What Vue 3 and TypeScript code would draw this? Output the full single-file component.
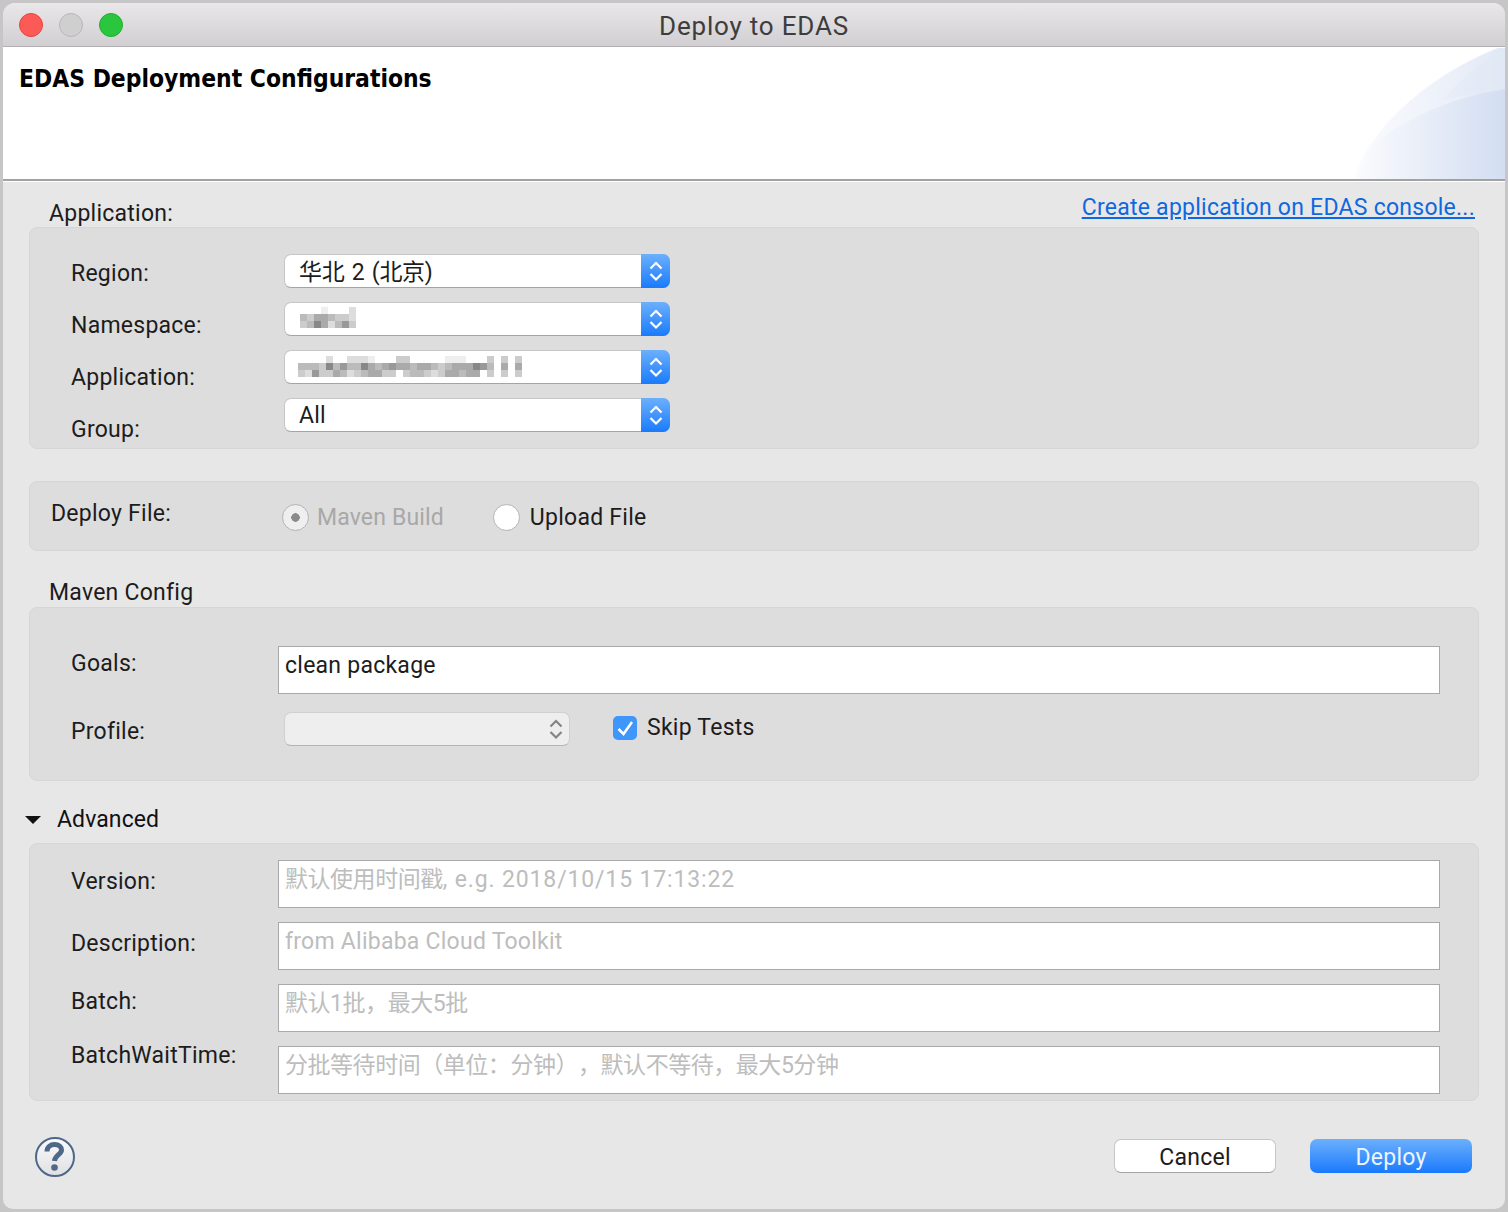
<script setup lang="ts">
const mosaics: Record<string, string[]> = {
  ns: ['fffefffd', 'bcaabccd', 'cb8adb9c'],
  app: [
    'ffffdffdddefffccfffffeeefffcfcfc',
    'bbbc8b9bb8aba9aabaabcbaaa89bfafa',
    'cd9ccabdcbaaccfcbbcdcaabaafcfcfc'
  ]
}
const g = (c: string) => `#${c}${c}${c}`
</script>

<template>
  <div class="window">
    <div class="titlebar">
      <div class="lights">
        <span class="light red"></span>
        <span class="light grey"></span>
        <span class="light green"></span>
      </div>
      <div class="title">Deploy to EDAS</div>
    </div>

    <header class="banner">
      <h1>EDAS Deployment Configurations</h1>
      <svg class="swoosh" width="152" height="132" viewBox="0 0 152 132">
        <defs>
          <linearGradient id="sw1" x1="0" x2="1" y1="0" y2="0">
            <stop offset="0" stop-color="#fbfcfe" />
            <stop offset="1" stop-color="#e2e9f6" />
          </linearGradient>
          <linearGradient id="sw2" x1="0" x2="1" y1="0" y2="0">
            <stop offset="0" stop-color="#fafbfd" />
            <stop offset="1" stop-color="#d3def2" />
          </linearGradient>
        </defs>
        <path d="M2 132C10 90 70 30 145 1H152V132Z" fill="url(#sw1)" />
        <path d="M90 53C105 35 125 18 150 1V43C130 46 110 48 90 53Z" fill="#d8e2f4" opacity="0.15" />
        <path d="M19 98C55 70 100 50 152 42V132H5Z" fill="url(#sw2)" />
      </svg>
    </header>

    <main class="content">
      <div class="section-head">
        <span class="legend">Application:</span>
        <a class="link">Create application on EDAS console...</a>
      </div>
      <section class="group app-group">
        <div class="labels">
          <label>Region:</label>
          <label>Namespace:</label>
          <label>Application:</label>
          <label>Group:</label>
        </div>
        <div class="selects">
          <div class="select"><span class="value tight">华北 2 (北京)</span><span class="stepper"><svg width="14" height="22" viewBox="0 0 14 22"><path d="M1.500 8.500 7 3 12.500 8.500M1.500 14 7 19.500 12.500 14" /></svg></span></div>
          <div class="select">
            <span class="mosaic ns"><i v-for="(row, r) in mosaics.ns" :key="r" class="mrow"><b v-for="(c, k) in row" :key="k" :style="{ background: g(c) }"></b></i></span>
            <span class="stepper"><svg width="14" height="22" viewBox="0 0 14 22"><path d="M1.500 8.500 7 3 12.500 8.500M1.500 14 7 19.500 12.500 14" /></svg></span>
          </div>
          <div class="select">
            <span class="mosaic app"><i v-for="(row, r) in mosaics.app" :key="r" class="mrow"><b v-for="(c, k) in row" :key="k" :style="{ background: g(c) }"></b></i></span>
            <span class="stepper"><svg width="14" height="22" viewBox="0 0 14 22"><path d="M1.500 8.500 7 3 12.500 8.500M1.500 14 7 19.500 12.500 14" /></svg></span>
          </div>
          <div class="select"><span class="value">All</span><span class="stepper"><svg width="14" height="22" viewBox="0 0 14 22"><path d="M1.500 8.500 7 3 12.500 8.500M1.500 14 7 19.500 12.500 14" /></svg></span></div>
        </div>
      </section>

      <section class="group deploy-group">
        <label class="deploy-label">Deploy File:</label>
        <div class="radio-line">
          <span class="radio disabled"></span>
          <span class="radio-text muted">Maven Build</span>
          <span class="radio second"></span>
          <span class="radio-text">Upload File</span>
        </div>
      </section>

      <div class="section-head maven-head">
        <span class="legend">Maven Config</span>
      </div>
      <section class="group maven-group">
        <div class="labels">
          <label>Goals:</label>
          <label>Profile:</label>
        </div>
        <div class="maven-fields">
          <div class="field">clean package</div>
          <div class="profile-line">
            <div class="select dim">
              <svg width="14" height="22" viewBox="0 0 14 22"><path d="M1.500 8.500 7 3 12.500 8.500M1.500 14 7 19.500 12.500 14" /></svg>
            </div>
            <span class="check">
              <svg width="24" height="24" viewBox="0 0 24 24"><path d="M5.500 13 10.500 18 19 6" /></svg>
            </span>
            <span class="check-text">Skip Tests</span>
          </div>
        </div>
      </section>

      <div class="advanced">
        <svg class="caret" width="16" height="8" viewBox="0 0 16 8"><path d="M0 0H16L8 8Z" /></svg>
        <span>Advanced</span>
      </div>
      <section class="group adv-group">
        <div class="labels">
          <label>Version:</label>
          <label>Description:</label>
          <label>Batch:</label>
          <label>BatchWaitTime:</label>
        </div>
        <div class="adv-fields">
          <div class="field ph"><span class="cjk">默认使用时间戳,</span> <span class="num">e.g. 2018/10/15 17:13:22</span></div>
          <div class="field ph">from Alibaba Cloud Toolkit</div>
          <div class="field ph cjk">默认1批，最大5批</div>
          <div class="field ph cjk">分批等待时间（单位：分钟），默认不等待，最大5分钟</div>
        </div>
      </section>

      <footer class="footer">
        <svg class="help" width="42" height="42" viewBox="0 0 42 42">
          <defs>
            <linearGradient id="hg" x1="0" x2="0" y1="0" y2="1">
              <stop offset="0" stop-color="#fbfbfc" />
              <stop offset="1" stop-color="#dfe0e3" />
            </linearGradient>
          </defs>
          <circle cx="21" cy="21" r="19" fill="url(#hg)" stroke="#4f6788" stroke-width="2" />
          <path d="M13 15.500C13 11 16.500 8.500 20.500 8.500C25 8.500 27.500 11 27.500 14C27.500 18.500 21 19 20.500 25" fill="none" stroke="#4f6788" stroke-width="5" />
          <circle cx="20.500" cy="31.500" r="3.300" fill="#4f6788" />
        </svg>
        <div class="buttons">
          <button class="btn">Cancel</button>
          <button class="btn primary">Deploy</button>
        </div>
      </footer>
    </main>
  </div>
</template>

<style scoped>
.window {
  box-sizing: border-box;
  width: 1502px;
  height: 1206px;
  margin: 3px 0 0 3px;
  background: #e7e7e7;
  border-radius: 12px 12px 10px 10px;
  overflow: hidden;
  font-family: Roboto, "Noto Sans CJK SC", sans-serif;
  font-size: 23px;
  color: #1c1c1c;
  letter-spacing: 0.25px;
  text-spacing-trim: space-all;
  display: flex;
  flex-direction: column;
}
.titlebar {
  position: relative;
  height: 44px;
  flex: none;
  box-sizing: border-box;
  border-bottom: 1px solid #b1afb1;
  background: linear-gradient(#e9e7e9, #d1cfd1);
  display: flex;
  align-items: center;
  justify-content: center;
}
.lights {
  position: absolute;
  left: 16px;
  top: 10px;
  display: flex;
  gap: 16px;
}
.light {
  width: 24px;
  height: 24px;
  box-sizing: border-box;
  border-radius: 50%;
  border: 1px solid;
}
.red { background: #fc5a56; border-color: #e5443f; }
.grey { background: #d0cfd0; border-color: #b8b6b8; }
.green { background: #2ac63e; border-color: #20ad32; }
.title { font-size: 26px; color: #3d3d3d; letter-spacing: 0.8px; position: relative; top: 1px; }
.banner {
  position: relative;
  height: 132px;
  flex: none;
  background: #fff;
  border-bottom: 2px solid #a2a2a2;
  box-shadow: 0 1px 0 #fff;
}
.banner h1 {
  margin: 0;
  padding: 17px 0 0 16px;
  font: bold 24.400px/30px "DejaVu Sans", sans-serif;
  font-stretch: condensed;
  letter-spacing: 0;
  color: #000;
}
.swoosh { position: absolute; right: 0; bottom: 0; }
.content { flex: 1; padding: 13px 26px 0; display: flex; flex-direction: column; }
.section-head {
  height: 33px;
  display: flex;
  justify-content: space-between;
  padding-left: 20px;
}
.legend { line-height: 40px; }
.link {
  color: #0f68e0;
  text-decoration: underline;
  margin-right: 4px;
  line-height: 28px;
}
.group {
  flex: none;
  box-sizing: border-box;
  background: #dddddd;
  border: 1px solid #d6d6d6;
  border-radius: 8px;
  display: flex;
}
.app-group { height: 222px; }
.labels { width: 248px; flex: none; padding-left: 41px; display: flex; flex-direction: column; box-sizing: border-box; }
.labels label { line-height: 30px; height: 28px; }
.app-group .labels { padding-top: 31px; gap: 24px; }
.selects { width: 386px; padding-top: 26px; display: flex; flex-direction: column; gap: 14px; margin-left: 6px; }
.select {
  position: relative;
  height: 34px;
  box-sizing: border-box;
  background: #fff;
  border: 1px solid #c6c6c6;
  border-bottom-color: #a4a4a4;
  border-radius: 7px;
  display: flex;
  align-items: center;
  padding-left: 14px;
}
.tight { letter-spacing: -0.3px; word-spacing: 2px; position: relative; top: -1px; }
.stepper {
  position: absolute;
  right: -1px;
  top: -1px;
  bottom: -1px;
  width: 29px;
  border-radius: 0 7px 7px 0;
  background: linear-gradient(#6cb0fc, #1a7afc);
  display: flex;
  align-items: center;
  justify-content: center;
}
.stepper svg path, .dim svg path {
  fill: none;
  stroke: #fff;
  stroke-width: 2.200;
}
.mosaic { display: flex; flex-direction: column; position: relative; top: -2px; }
.mrow { display: flex; height: 7px; }
.mrow b { width: 7px; height: 7px; display: block; }
.mosaic.ns { margin-left: 1px; }
.mosaic.app { margin-left: -1px; top: -1px; }
.deploy-group { height: 70px; margin-top: 32px; }
.deploy-label { margin-left: 21px; line-height: 64px; width: 231px; }
.radio-line { display: flex; align-items: center; height: 70px; }
.radio {
  width: 27px;
  height: 27px;
  box-sizing: border-box;
  border-radius: 50%;
  background: #fff;
  border: 1px solid #b4b4b4;
  margin-top: 1px;
}
.radio.disabled {
  background: radial-gradient(circle, #8a8a8a 0 4px, #efefef 4.500px);
}
.radio-text { margin-left: 10px; }
.muted { color: #a8a8a8; margin-left: 8px; letter-spacing: 0.15px; }
.radio.second { margin-left: 49px; }
.maven-head { margin-top: 22px; height: 34px; }
.maven-group { height: 174px; }
.maven-group .labels { padding-top: 41px; gap: 40px; }
.maven-fields { flex: 1; padding-top: 38px; }
.field {
  box-sizing: border-box;
  height: 48px;
  width: 1162px;
  background: #fff;
  border: 1px solid #a9a9a9;
  padding-left: 6px;
  line-height: 38px;
}
.ph { color: #bdbdbd; }
.cjk { letter-spacing: -0.46px; }
.num { letter-spacing: 0.85px; margin-left: 2px; }
.profile-line { display: flex; align-items: center; margin: 18px 0 0 6px; height: 34px; }
.select.dim {
  width: 286px;
  background: #eeeeee;
  justify-content: flex-end;
  padding-right: 6px;
  border-color: #d0d0d0;
  border-bottom-color: #b4b4b4;
}
.dim svg path { stroke: #848484; }
.check {
  width: 24px;
  height: 24px;
  border-radius: 5px;
  background: #3f96fb;
  margin-left: 43px;
  margin-top: -2px;
}
.check svg { display: block; }
.check path { fill: none; stroke: #fff; stroke-width: 2.500; }
.check-text { margin-left: 10px; position: relative; top: -2px; }
.advanced {
  box-sizing: border-box;
  height: 62px;
  padding-top: 14px;
  display: flex;
  align-items: center;
  margin-left: -4px;
  flex: none;
}
.caret { margin: 2px 16px 0 0; }
.caret path { fill: #111; }
.advanced span { color: #111; letter-spacing: 0.1px; }
.adv-group { height: 258px; }
.adv-group .labels { padding-top: 23px; }
.adv-group .labels label:nth-child(2) { margin-top: 34px; }
.adv-group .labels label:nth-child(3) { margin-top: 30px; }
.adv-group .labels label:nth-child(4) { margin-top: 26px; }
.adv-fields { flex: 1; padding-top: 16px; display: flex; flex-direction: column; gap: 14px; }
.footer {
  display: flex;
  justify-content: space-between;
  align-items: flex-start;
  padding-top: 35px;
  margin: 0 7px 0 5px;
}
.help { display: block; }
.buttons { display: flex; gap: 34px; padding-top: 3px; }
.btn {
  width: 162px;
  height: 34px;
  box-sizing: border-box;
  border: 1px solid #c6c6c6;
  border-bottom-color: #a4a4a4;
  border-radius: 7px;
  background: #fff;
  font: inherit;
  letter-spacing: inherit;
  color: #1c1c1c;
  padding: 2px 0 0;
}
.btn.primary {
  background: linear-gradient(#6cb0fc, #1a7afc);
  color: #eef5ff;
  border: 0;
}
</style>

<style>
html, body { background: #c6c6c6; margin: 0; }
</style>
